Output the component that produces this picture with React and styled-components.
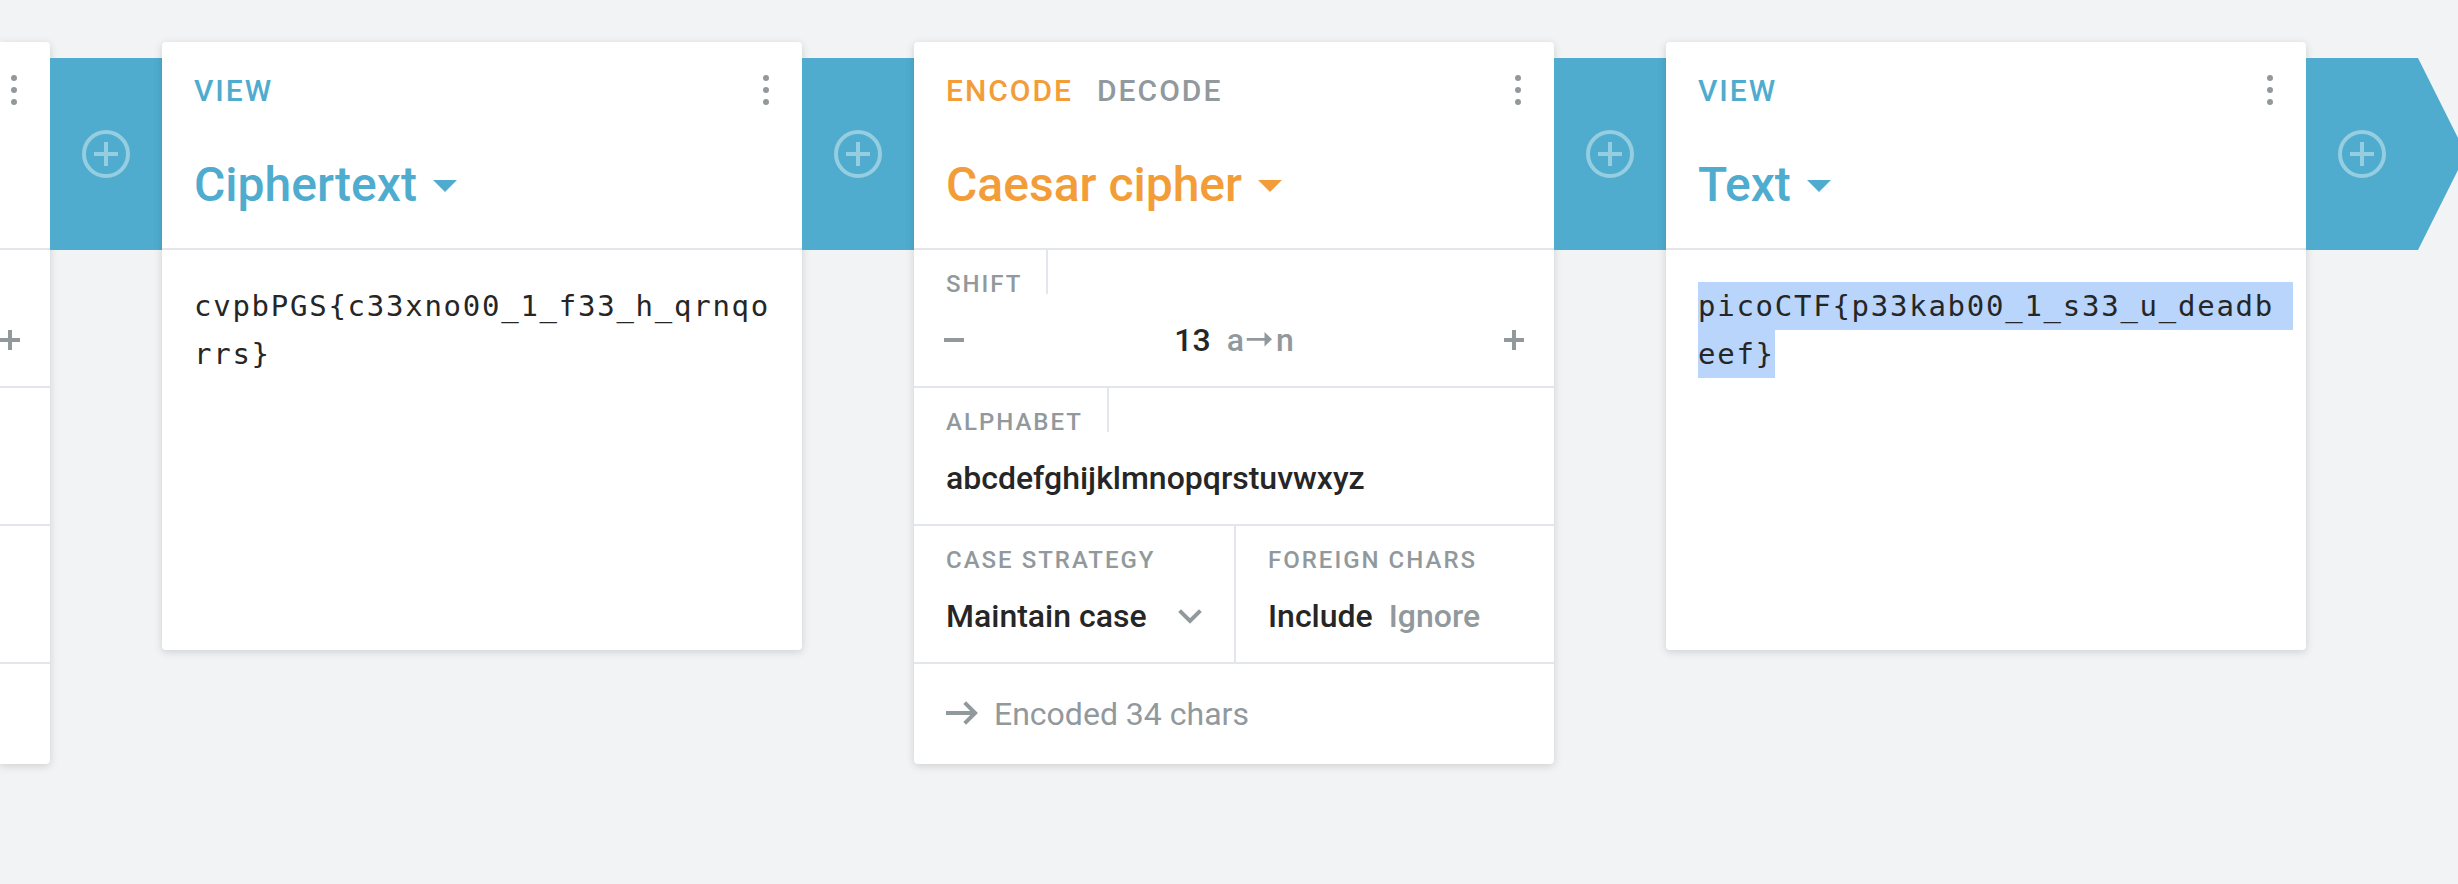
import React from "react";
import styled, { createGlobalStyle } from "styled-components";

const BLUE = "#4facce";
const ORANGE = "#f29d38";
const GRAY = "#91999d";
const INK = "#262626";
const LINE = "#e3e7eb";

const GlobalStyle = createGlobalStyle`
  * { box-sizing: border-box; }
  body {
    margin: 0;
    background: #f2f3f5;
    font-family: Roboto, "Liberation Sans", sans-serif;
  }
`;

const Page = styled.main`
  width: 100%;
  height: 884px;
  overflow: hidden;
  background: #f2f3f5;
`;

const Track = styled.div`
  display: flex;
  align-items: flex-start;
  padding-top: 42px;
`;

const Card = styled.section`
  flex: none;
  width: ${(p) => (p.$clipped ? "50px" : "640px")};
  height: ${(p) => p.$height}px;
  background: #fff;
  border-radius: ${(p) => (p.$clipped ? "0 4px 4px 0" : "4px")};
  box-shadow: 0 2px 8px rgba(0, 0, 0, 0.15);
`;

const Header = styled.header`
  height: 208px;
  padding: 30px 32px 0 ${(p) => (p.$clipped ? 10 : 32)}px;
  border-bottom: 2px solid ${LINE};
`;

const HeaderTop = styled.div`
  display: flex;
  justify-content: space-between;
  height: 36px;
`;

const Modes = styled.div`
  display: flex;
  gap: 24px;
`;

const Mode = styled.span`
  font-size: 30px;
  font-weight: 500;
  line-height: 38px;
  letter-spacing: 2px;
  color: ${(p) => p.$color};
`;

const MenuDots = styled.svg`
  display: block;
  flex: none;
  width: 8px;
  height: 36px;
  fill: ${GRAY};
`;

const Title = styled.h2`
  display: flex;
  align-items: center;
  gap: 16px;
  height: 60px;
  margin: 47px 0 0;
  font-size: 48px;
  font-weight: 500;
  line-height: 60px;
  color: ${(p) => p.$color};
`;

const Caret = styled.svg`
  display: block;
  width: 24px;
  height: 12px;
  margin-top: 2px;
  fill: currentColor;
`;

const Pipe = styled.div`
  flex: none;
  display: flex;
  align-items: center;
  width: ${(p) => (p.$end ? 160 : 112)}px;
  height: 192px;
  margin-top: 16px;
  padding-left: 32px;
  background: ${BLUE};
  ${(p) => p.$end && "clip-path: polygon(0 0, 112px 0, 100% 50%, 112px 100%, 0 100%);"}
`;

const AddIcon = styled.svg`
  display: block;
  width: 48px;
  height: 48px;
  fill: none;
  stroke: rgba(255, 255, 255, 0.4);
  stroke-width: 4;
`;

const Content = styled.div`
  padding: 32px 32px 0;
  font-family: "DejaVu Sans Mono", "Liberation Mono", monospace;
  font-size: 29px;
  line-height: 48px;
  letter-spacing: 1.74px;
  color: ${INK};
`;

const TextLine = styled.div`
  width: max-content;
  height: 48px;
  white-space: pre;
  background: ${(p) => (p.$selected ? "#b9d5fb" : "transparent")};
`;

const Row = styled.div`
  display: flex;
  height: 138px;
  border-bottom: 2px solid ${LINE};
`;

const Field = styled.div`
  flex: 1;
  min-width: 0;
`;

const SplitField = styled(Field)`
  flex: none;
  width: ${(p) => p.$width}px;
  border-right: ${(p) => (p.$divider ? `2px solid ${LINE}` : "0")};
`;

const Label = styled.div`
  width: max-content;
  height: 44px;
  padding: 20px 24px 0 32px;
  border-right: ${(p) => (p.$tab ? `2px solid ${LINE}` : "0")};
  font-size: 24px;
  font-weight: 500;
  line-height: 28px;
  letter-spacing: 2px;
  color: ${GRAY};
  white-space: nowrap;
`;

const Value = styled.div`
  display: flex;
  align-items: center;
  gap: 16px;
  height: 48px;
  margin-top: 22px;
  padding: 0 32px;
  font-size: 32px;
  font-weight: 500;
  line-height: 48px;
  color: ${INK};
`;

const SelectValue = styled(Value)`
  justify-content: space-between;
`;

const Stepper = styled(Value)`
  justify-content: space-between;
  padding: 0 30px;
`;

const StepValue = styled.div`
  display: flex;
  gap: 16px;
`;

const Muted = styled.span`
  display: flex;
  align-items: center;
  color: ${GRAY};
`;

const MapsTo = styled.svg`
  display: block;
  width: 32px;
  height: 16px;
  fill: currentColor;
`;

const LineIcon = styled.svg`
  display: block;
  flex: none;
  width: ${(p) => p.$w}px;
  height: ${(p) => p.$h}px;
  overflow: visible;
  fill: none;
  stroke: ${GRAY};
  stroke-width: 4;
`;

const Footer = styled.footer`
  display: flex;
  align-items: center;
  gap: 16px;
  height: 100px;
  padding: 0 32px;
  font-size: 32px;
  line-height: 48px;
  color: ${GRAY};
`;

const ClippedStep = styled.div`
  padding-top: 80px;
`;

function Dots() {
  return (
    <MenuDots viewBox="0 0 8 36">
      <circle cx="4" cy="6" r="3" />
      <circle cx="4" cy="18" r="3" />
      <circle cx="4" cy="30" r="3" />
    </MenuDots>
  );
}

function Connector({ end }) {
  return (
    <Pipe $end={end}>
      <AddIcon viewBox="0 0 48 48">
        <circle cx="24" cy="24" r="22" />
        <path d="M12 24H36M24 12V22M24 26V36" />
      </AddIcon>
    </Pipe>
  );
}

function CardHeader({ modes, title, color }) {
  return (
    <Header>
      <HeaderTop>
        <Modes>
          {modes.map((mode, i) => (
            <Mode key={mode} $color={i === 0 ? color : GRAY}>{mode}</Mode>
          ))}
        </Modes>
        <Dots />
      </HeaderTop>
      <Title $color={color}>
        {title}
        <Caret viewBox="0 0 24 12"><path d="M0 0H24L12 12Z" /></Caret>
      </Title>
    </Header>
  );
}

function PlusIcon() {
  return (
    <LineIcon $w={20} $h={20} viewBox="0 0 20 20"><path d="M0 10H20M10 0V20" /></LineIcon>
  );
}

function ViewCard({ title, lines, selected }) {
  return (
    <Card $height={608}>
      <CardHeader modes={["VIEW"]} title={title} color={BLUE} />
      <Content>
        {lines.map((line) => (
          <TextLine key={line} $selected={selected}>{line}</TextLine>
        ))}
      </Content>
    </Card>
  );
}

function CipherCard() {
  return (
    <Card $height={722}>
      <CardHeader modes={["ENCODE", "DECODE"]} title="Caesar cipher" color={ORANGE} />
      <Row>
        <Field>
          <Label $tab>SHIFT</Label>
          <Stepper>
            <LineIcon $w={20} $h={20} viewBox="0 0 20 20"><path d="M0 10H20" /></LineIcon>
            <StepValue>
              <span>13</span>
              <Muted>
                <span>a</span>
                <MapsTo viewBox="0 0 32 16">
                  <path d="M2.700 5.900H20.500V0L28 7.300L20.500 14.600V8.800H2.700Z" />
                </MapsTo>
                <span>n</span>
              </Muted>
            </StepValue>
            <PlusIcon />
          </Stepper>
        </Field>
      </Row>
      <Row>
        <Field>
          <Label $tab>ALPHABET</Label>
          <Value>abcdefghijklmnopqrstuvwxyz</Value>
        </Field>
      </Row>
      <Row>
        <SplitField $width={322} $divider>
          <Label>CASE STRATEGY</Label>
          <SelectValue>
            Maintain case
            <LineIcon $w={24} $h={14} viewBox="0 0 24 14"><path d="M1.600 1.600L12 12L22.400 1.600" /></LineIcon>
          </SelectValue>
        </SplitField>
        <SplitField $width={318}>
          <Label>FOREIGN CHARS</Label>
          <Value>
            <span>Include</span>
            <Muted>Ignore</Muted>
          </Value>
        </SplitField>
      </Row>
      <Footer>
        <LineIcon $w={32} $h={24} viewBox="0 0 32 24"><path d="M0 11H29M18.700 0.600L29.100 11L18.700 21.400" /></LineIcon>
        Encoded 34 chars
      </Footer>
    </Card>
  );
}

function ClippedCard() {
  return (
    <Card $height={722} $clipped>
      <Header $clipped>
        <Dots />
      </Header>
      <Row><ClippedStep><PlusIcon /></ClippedStep></Row>
      <Row />
      <Row />
    </Card>
  );
}

export default function App() {
  return (
    <Page>
      <GlobalStyle />
      <Track>
        <ClippedCard />
        <Connector />
        <ViewCard title="Ciphertext" lines={["cvpbPGS{c33xno00_1_f33_h_qrnqo", "rrs}"]} />
        <Connector />
        <CipherCard />
        <Connector />
        <ViewCard title="Text" lines={["picoCTF{p33kab00_1_s33_u_deadb ", "eef}"]} selected />
        <Connector end />
      </Track>
    </Page>
  );
}
